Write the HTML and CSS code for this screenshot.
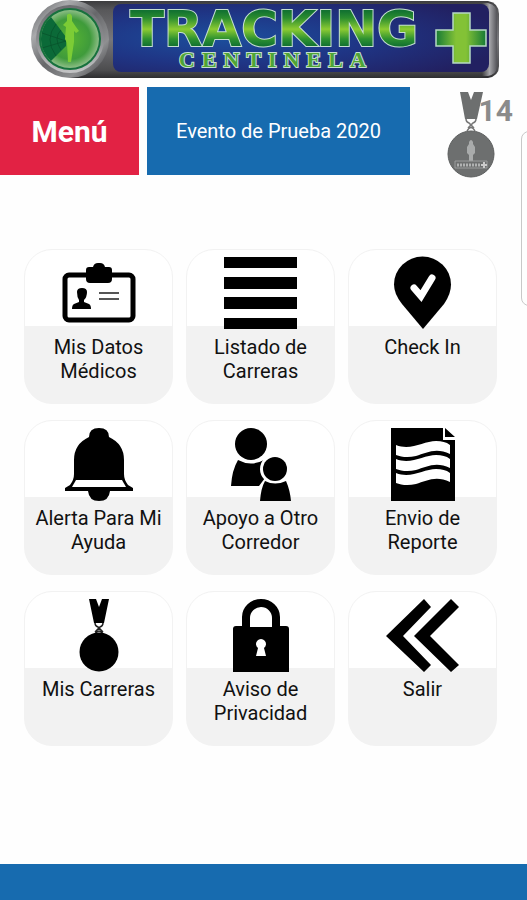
FILE: index.html
```html
<!DOCTYPE html>
<html lang="es">
<head>
<meta charset="utf-8">
<meta name="viewport" content="width=device-width, initial-scale=1">
<title>Tracking Centinela</title>
<link rel="stylesheet" href="styles.css">
</head>
<body>
<header>
  <svg class="logo" viewBox="0 0 527 80" role="img" aria-label="Tracking Centinela +">
    <defs>
      <linearGradient id="steel" x2="0" y2="1">
        <stop offset="0" stop-color="#3c3c3e"/><stop offset=".12" stop-color="#58585a"/>
        <stop offset=".5" stop-color="#77777b"/><stop offset=".9" stop-color="#4c4c4e"/><stop offset="1" stop-color="#2e2e30"/>
      </linearGradient>
      <linearGradient id="edge">
        <stop offset="0" stop-color="#9a9a9e" stop-opacity="0"/><stop offset=".5" stop-color="#a6a6aa"/><stop offset="1" stop-color="#55555a"/>
      </linearGradient>
      <linearGradient id="ring" x2="1" y2="1">
        <stop offset="0" stop-color="#55565a"/><stop offset=".25" stop-color="#a9aaac"/>
        <stop offset=".5" stop-color="#66676a"/><stop offset=".75" stop-color="#8e8f91"/><stop offset="1" stop-color="#333337"/>
      </linearGradient>
      <linearGradient id="ringInner" x2="0" y2="1">
        <stop offset="0" stop-color="#6c6d70"/><stop offset=".5" stop-color="#8a8b8e"/><stop offset="1" stop-color="#c4c5c6"/>
      </linearGradient>
      <radialGradient id="panel" cx=".3" cy=".5" r=".75">
        <stop offset="0" stop-color="#1c4f9d"/><stop offset=".5" stop-color="#1f3585"/><stop offset="1" stop-color="#222061"/>
      </radialGradient>
      <radialGradient id="lens">
        <stop offset="0" stop-color="#58b531"/><stop offset=".7" stop-color="#3f9b3b"/><stop offset="1" stop-color="#8cbd86"/>
      </radialGradient>
      <linearGradient id="leaf" gradientUnits="userSpaceOnUse" x1="0" y1="11" x2="0" y2="46">
        <stop offset="0" stop-color="#127231"/><stop offset=".2" stop-color="#2b8d2f"/><stop offset=".52" stop-color="#8ccb32"/>
        <stop offset=".8" stop-color="#2d9130"/><stop offset="1" stop-color="#127231"/>
      </linearGradient>
      <linearGradient id="plusH">
        <stop offset="0" stop-color="#167a35"/><stop offset=".4" stop-color="#83c236"/><stop offset=".6" stop-color="#83c236"/><stop offset="1" stop-color="#167a35"/>
      </linearGradient>
    </defs>
    <path fill="url(#steel)" d="M70 1H488Q499 3 499 14V66Q499 76 488 78H70Z"/>
    <path fill="url(#edge)" d="M482 3H488Q497 5 497 14V66Q497 74 488 76H482Z"/>
    <rect x="113" y="4" width="376" height="68" rx="8" fill="url(#panel)"/>
    <circle cx="70" cy="39" r="39" fill="url(#ring)"/>
    <circle cx="70" cy="39" r="34" fill="url(#ringInner)"/>
    <circle cx="70" cy="39" r="31" fill="#17713d"/>
    <circle cx="70" cy="39" r="29" fill="url(#lens)"/>
    <path fill="#0b6a38" d="M66 37L51 17A29 29 0 0 0 51 61L66 46Z"/>
    <g fill="none" stroke="#07502a" stroke-width=".7"><path d="M61 30Q53 38 61 50M56 24Q44 39 56 56M42 33L66 41L42 48"/></g>
    <path fill="#7ccc35" d="M67 15Q70 12 72 16L72 21L76 27L79 31L76 33L74 31V42L71 62H68L67 43L65 39L66 27L63 25L67 21Z"/>
    <text class="logo-name" x="274" y="46" text-anchor="middle">TRACKING</text>
    <text class="logo-sub" x="179" y="67">CENTINELA</text>
    <path d="M453 13H470V30H486V46H470V63H453V46H436V30H453Z" fill="url(#plusH)" stroke="#b5d9c3" stroke-width="1.5"/>
  </svg>
</header>

<section class="status">
  <h1 class="title">Menú</h1>
  <p class="event">Evento de Prueba 2020</p>
  <div class="medals">
    <svg class="medal" viewBox="0 0 48 87" aria-hidden="true">
      <path fill="#6d6f6f" d="M13 1H21L24 9L27 1H36L30 28H18Z"/>
      <path fill="none" stroke="#777" stroke-width="1.5" d="M19 28Q19 31 22 32L27 37M29 28Q29 31 26 32L21 37M20 40Q24 33 28 40"/>
      <circle cx="24" cy="63" r="23" fill="#6d6f6f" stroke="#5d5f5f"/>
      <path fill="#a9abab" d="M22 51Q24 47 26 51V53L28 56V62L26 64V70H22V64L20 62V56L22 53Z"/>
      <path fill="none" stroke="#9b9d9d" d="M8 70H40V77H8Z"/>
      <path stroke="#b0b2b2" stroke-width="3" stroke-dasharray="2 1" d="M10 74H34"/>
      <path stroke="#ccc" stroke-width="2" d="M34 74H40M37 71V77"/>
    </svg>
    <span class="count">14</span>
  </div>
</section>
<div class="drawer" aria-hidden="true"></div>

<main class="menu">
  <button class="card" type="button">
    <svg viewBox="0 0 74 74" aria-hidden="true">
      <rect x="3" y="19" width="68" height="45" rx="4" fill="none" stroke="#000" stroke-width="5"/>
      <path d="M27 11H31Q32 7 36 7H38Q42 7 43 11H47Q50 11 50 14V23Q50 27 46 27H28Q24 27 24 23V14Q24 11 27 11Z"/>
      <path d="M15 36Q15 32 20 32T25 36Q25 41 22 44V46L27 48Q29 49 29 53H10Q10 49 12 48L17 46V44Q15 41 15 36Z"/>
      <path stroke="#555" stroke-width="2" d="M37 37H57M37 43H57"/>
    </svg>
    <span>Mis Datos Médicos</span>
  </button>
  <button class="card" type="button">
    <svg viewBox="0 0 74 74" aria-hidden="true"><path d="M0 1H73V12H0ZM0 21H73V33H0ZM0 41H73V53H0ZM0 62H73V73H0Z"/></svg>
    <span>Listado de Carreras</span>
  </button>
  <button class="card" type="button">
    <svg viewBox="0 0 74 74" aria-hidden="true">
      <path d="M37 73L16 48Q8 38 8 28.500A28.500 28 0 0 1 65 28.500Q65 38 58 48Z"/>
      <path fill="none" stroke="#fff" stroke-width="7" stroke-linecap="round" d="M28 32L35 40L46 22"/>
    </svg>
    <span>Check In</span>
  </button>
  <button class="card" type="button">
    <svg viewBox="0 0 74 74" aria-hidden="true">
      <path d="M27 10Q27 1 37 1T47 10Q62 17 62 33V47Q62 53 66 58L71 61V64H48Q47 74 37 74T26 64H3V61L8 58Q12 53 12 47V33Q12 17 27 10Z"/>
      <path fill="#fff" d="M14 53H60L64 60H10Z"/>
    </svg>
    <span>Alerta Para Mi Ayuda</span>
  </button>
  <button class="card" type="button">
    <svg viewBox="0 0 74 74" aria-hidden="true">
      <circle cx="27" cy="17" r="16"/>
      <path d="M14 33Q27 40 40 33L40 59H7Q8 43 14 33Z"/>
      <circle cx="51" cy="42" r="15" fill="#fff"/>
      <path fill="#fff" d="M41 51H60L64 59H35Z"/>
      <circle cx="51" cy="42" r="12"/>
      <path d="M41 54Q51 59 62 54Q66 63 67 74H36Q37 61 41 54Z"/>
    </svg>
    <span>Apoyo a Otro Corredor</span>
  </button>
  <button class="card" type="button">
    <svg viewBox="0 0 74 74" aria-hidden="true">
      <path d="M5 1H57V13H69V74H5ZM59 1L69 10H59Z"/>
      <g fill="#fff">
        <path id="wave" d="M10 18C25 24 38 14 50 14C56 14 60 15 64 18V27C50 20 40 26 30 29C22 31 15 30 10 28Z"/>
        <use href="#wave" y="14"/><use href="#wave" y="28"/>
      </g>
    </svg>
    <span>Envio de Reporte</span>
  </button>
  <button class="card" type="button">
    <svg viewBox="0 0 74 74" aria-hidden="true">
      <path d="M27 1H34L37 9L40 1H47L42 25H32Z"/>
      <path fill="none" stroke="#222" stroke-width="1.5" d="M33 25Q33 28 36 29L41 34M41 25Q41 28 38 29L33 34M33 36Q37 30 41 36"/>
      <circle cx="37" cy="54" r="19.5"/>
    </svg>
    <span>Mis Carreras</span>
  </button>
  <button class="card" type="button">
    <svg viewBox="0 0 74 74" aria-hidden="true">
      <path fill-rule="evenodd" d="M18 28V19A19 18 0 0 1 56 19V28H62Q65 28 65 31V74H9V31Q9 28 12 28ZM26 29H48V20A11 11 0 0 0 26 20ZM34 50L32 58H42L40 50A5 5 0 1 0 34 50Z"/>
    </svg>
    <span>Aviso de Privacidad</span>
  </button>
  <button class="card" type="button">
    <svg viewBox="0 0 74 74" aria-hidden="true">
      <path d="M0 38L38 1L45 9L17 38L45 67L38 74ZM28 38L65 1L73 9L44 38L73 67L65 74Z"/>
    </svg>
    <span>Salir</span>
  </button>
</main>
<footer></footer>
</body>
</html>
```
FILE: styles.css
```css
* {
  box-sizing: border-box;
}

body {
  margin: 0;
  min-height: 100vh;
  display: flex;
  flex-direction: column;
  position: relative;
  overflow-x: hidden;
  background: #fefefe;
  color: #111;
  font-family: Roboto, "Liberation Sans", sans-serif;
}

.logo {
  display: block;
  width: 100%;
}

.logo-name,
.logo-sub {
  stroke: #c5dfd0;
  stroke-width: 2px;
  paint-order: stroke;
}

.logo-name {
  fill: url(#leaf);
  font: bold 50px "DejaVu Sans", sans-serif;
}

.logo-sub {
  fill: #4fa535;
  font: bold 22px "Liberation Serif", serif;
  letter-spacing: 7px;
}

.status {
  display: grid;
  grid-template-columns: 139fr 263fr 109fr;
  gap: 8px;
  margin-top: 7px;
}

.title,
.event {
  display: flex;
  align-items: center;
  justify-content: center;
  min-height: 88px;
  margin: 0;
  color: #fff;
}

.title {
  background: #e22244;
  font-size: 30px;
  font-weight: 700;
}

.event {
  background: #176baf;
  font-size: 20px;
}

.medals {
  display: flex;
  align-items: flex-start;
  justify-content: flex-end;
  padding: 4px 14px 0 0;
}

.medal {
  width: 48px;
  flex: none;
  margin-bottom: -4px;
}

.count {
  margin-left: -16px;
  padding-top: 4px;
  color: #8b8b8b;
  font-size: 30px;
  font-weight: 700;
  line-height: 32px;
}

.drawer {
  position: absolute;
  top: 131px;
  right: -10px;
  width: 16px;
  height: 175px;
  border: 1px solid #c8c8c8;
  border-radius: 8px;
}

.menu {
  display: grid;
  grid-template-columns: repeat(3, 1fr);
  gap: 16px 13px;
  margin: 74px 30px 40px 24px;
}

.card {
  display: flex;
  flex-direction: column;
  align-items: center;
  min-height: 155px;
  padding: 6px 4px;
  border: 1px solid #f2f2f2;
  border-radius: 28px;
  background: linear-gradient(#fff 76px, #f2f2f2 76px);
  color: #111;
  font: 20px/24px Roboto, "Liberation Sans", sans-serif;
  text-align: center;
}

.card svg {
  width: 74px;
  height: 74px;
  margin-bottom: 5px;
}

.card span {
  max-width: 136px;
}

footer {
  height: 36px;
  margin-top: auto;
  background: #176baf;
}
```
